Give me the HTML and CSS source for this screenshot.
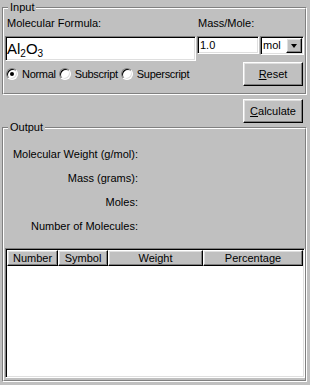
FILE: index.html
```html
<!DOCTYPE html>
<html>
<head>
<meta charset="utf-8">
<title>Molecular Weight</title>
<link rel="stylesheet" href="styles.css">
</head>
<body>
<div class="app">
  <div class="group group-input">
    <span class="legend">Input</span>
    <div class="group-inner input-inner">
      <div class="col-left">
        <div class="lbl">Molecular Formula:</div>
        <div class="sunken formula">Al<sub>2</sub>O<sub>3</sub></div>
        <div class="radios">
          <span class="radio checked"></span><span class="rtext">Normal</span>
          <span class="radio"></span><span class="rtext">Subscript</span>
          <span class="radio"></span><span class="rtext">Superscript</span>
        </div>
      </div>
      <div class="col-right">
        <div class="lbl">Mass/Mole:</div>
        <div class="mass-row">
          <div class="sunken mass">1.0</div>
          <div class="sunken combo">
            <span class="combo-text">mol</span>
            <span class="raised combo-btn"><span class="arrow"></span></span>
          </div>
        </div>
        <div class="raised btn reset"><span><u>R</u>eset</span></div>
      </div>
    </div>
  </div>

  <div class="calc-row">
    <div class="raised btn calc"><span><u>C</u>alculate</span></div>
  </div>

  <div class="group group-output">
    <span class="legend">Output</span>
    <div class="group-inner output-inner">
      <div class="fields">
        <div class="field-label">Molecular Weight (g/mol):</div>
        <div class="field-label">Mass (grams):</div>
        <div class="field-label">Moles:</div>
        <div class="field-label">Number of Molecules:</div>
      </div>
      <div class="sunken list">
        <div class="list-header">
          <div class="raised hcell c-number">Number</div>
          <div class="raised hcell c-symbol">Symbol</div>
          <div class="raised hcell c-weight">Weight</div>
          <div class="raised hcell c-percent">Percentage</div>
        </div>
        <div class="list-body"></div>
      </div>
    </div>
  </div>
</div>
</body>
</html>
```
FILE: styles.css
```css
* { box-sizing: border-box; }
html, body { margin: 0; padding: 0; }
body {
  background: #c0c0c0;
  font-family: "Liberation Sans", Arial, sans-serif;
  font-size: 11px;
  line-height: 13px;
  color: #000;
  width: 310px;
  height: 385px;
  overflow: hidden;
}
.app {
  padding: 0 3px 0 2px;
  display: flex;
  flex-direction: column;
}

/* group boxes (etched frame) */
.group {
  position: relative;
  border: 1px solid;
  border-color: #808080 #fff #fff #808080;
}
.group-inner {
  height: 100%;
  border: 1px solid;
  border-color: #fff #808080 #808080 #fff;
}
.legend {
  position: absolute;
  top: -7px;
  left: 5px;
  padding: 0 2px;
  background: #c0c0c0;
  line-height: 13px;
}

/* 3D edges */
.sunken {
  border: 1px solid;
  border-color: #808080 #fff #fff #808080;
  box-shadow: inset 1px 1px 0 #000, inset -1px -1px 0 #dfdfdf;
  background: #fff;
}
.raised {
  border: 1px solid;
  border-color: #fff #000 #000 #fff;
  box-shadow: inset -1px -1px 0 #808080, inset 1px 1px 0 #dfdfdf;
  background: #c0c0c0;
}

/* input group */
.group-input {
  margin-top: 7px;
  height: 88px;
}
.input-inner {
  display: flex;
  gap: 1px;
  padding: 8px 1px 0 1px;
}
.col-left {
  width: 191px;
  display: flex;
  flex-direction: column;
}
.col-right {
  flex: 1;
  display: flex;
  flex-direction: column;
}
.lbl {
  height: 13px;
  margin-bottom: 6px;
  padding-left: 2px;
  white-space: nowrap;
}
.col-right .lbl { padding-left: 1px; }

.formula {
  height: 25px;
  padding: 3px 2px 0 1px;
  font-size: 15px;
  line-height: 18px;
  white-space: nowrap;
}
.formula sub {
  font-size: 10px;
  line-height: 0;
  vertical-align: -3px;
}

.radios {
  margin-top: 7px;
  height: 12px;
  display: flex;
  align-items: center;
  padding-left: 1px;
  white-space: nowrap;
  letter-spacing: -0.3px;
}
.radio {
  position: relative;
  flex: none;
  width: 12px;
  height: 12px;
  border-radius: 50%;
  border: 1px solid;
  border-color: #808080 #fff #fff #808080;
  background: #fff;
  box-shadow: inset 1px 1px 0 #000, inset -1px -1px 0 #dfdfdf;
  margin-right: 4px;
}
.radio.checked::after {
  content: "";
  position: absolute;
  left: 3px;
  top: 3px;
  width: 4px;
  height: 4px;
  border-radius: 50%;
  background: #000;
}
.rtext { margin-right: 3px; }

.mass-row {
  display: flex;
  gap: 1px;
  height: 19px;
}
.mass {
  width: 62px;
  height: 18px;
  padding: 2px 2px 0 2px;
}
.combo {
  width: 44px;
  height: 19px;
  padding: 1px;
  display: flex;
}
.combo-text {
  flex: 1;
  padding: 1px 0 0 1px;
  line-height: 13px;
}
.combo-btn {
  width: 16px;
  height: 15px;
  display: flex;
  align-items: center;
  justify-content: center;
}
.arrow {
  width: 0;
  height: 0;
  border-left: 3.5px solid transparent;
  border-right: 3.5px solid transparent;
  border-top: 4px solid #000;
  margin-top: 1px;
}

.btn {
  width: 60px;
  height: 24px;
  display: flex;
  align-items: center;
  justify-content: center;
}
.reset {
  margin-top: 7px;
  align-self: flex-end;
  margin-right: 1px;
}

.calc-row {
  margin-top: 4px;
  display: flex;
  justify-content: flex-end;
  padding-right: 4px;
}

/* output group */
.group-output {
  margin-top: 4px;
  height: 255px;
}
.output-inner {
  display: flex;
  flex-direction: column;
  padding: 19px 0 2px 1px;
}
.fields {
  display: flex;
  flex-direction: column;
  gap: 11px;
}
.field-label {
  width: 133px;
  height: 13px;
  text-align: right;
  white-space: nowrap;
}
.list {
  margin-top: 15px;
  flex: 1;
  padding: 1px;
  display: flex;
  flex-direction: column;
}
.list-header {
  display: flex;
  height: 16px;
}
.hcell {
  height: 16px;
  text-align: center;
  line-height: 13px;
  padding-top: 1px;
}
.c-number { width: 51px; }
.c-symbol { width: 50px; }
.c-weight { width: 95px; }
.c-percent { width: 100px; }
.list-body {
  flex: 1;
  background: #fff;
}
```
